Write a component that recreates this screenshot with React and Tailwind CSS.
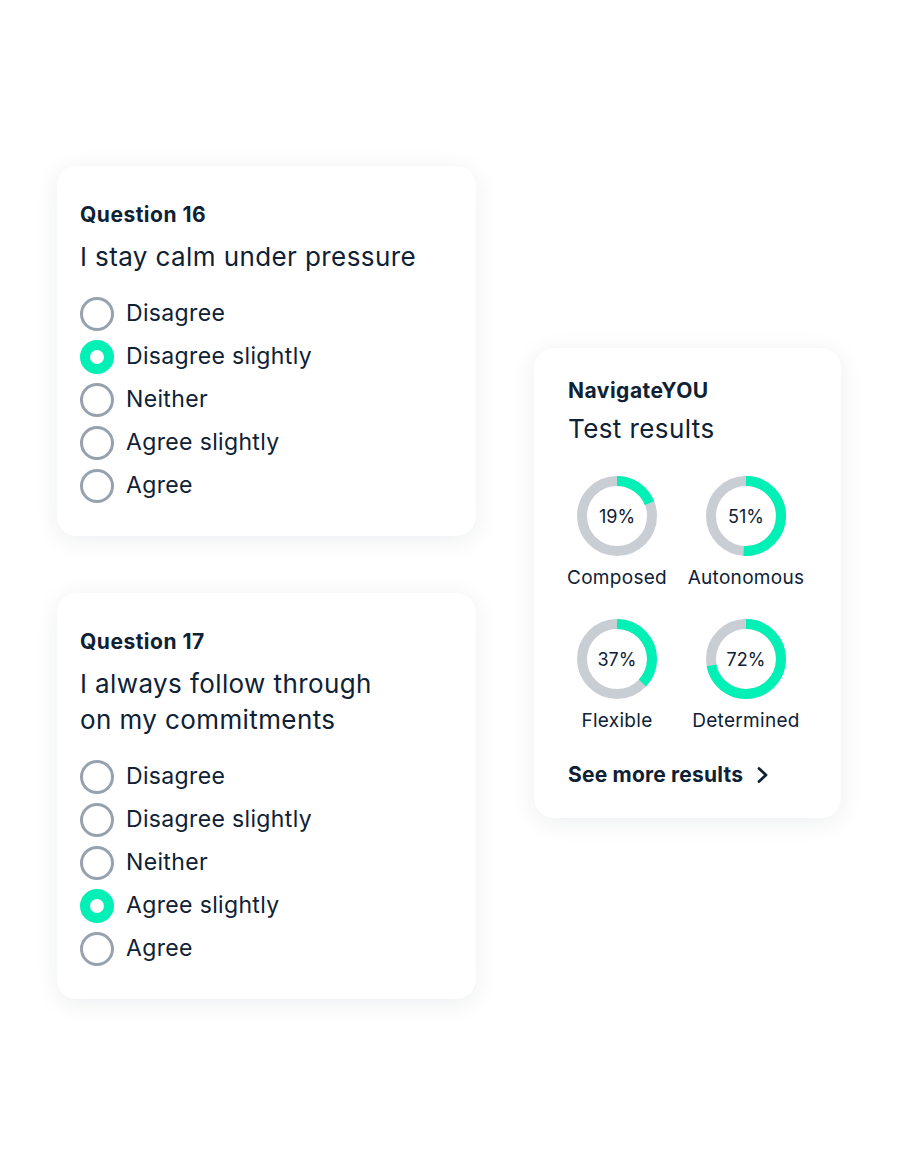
const OPTIONS = ['Disagree', 'Disagree slightly', 'Neither', 'Agree slightly', 'Agree'];

const RESULTS = [
  { label: 'Composed', value: 19 },
  { label: 'Autonomous', value: 51 },
  { label: 'Flexible', value: 37 },
  { label: 'Determined', value: 72 },
];

function Radio({ checked }) {
  if (checked) {
    return <span className="w-[34px] h-[34px] rounded-full border-[10px] border-[#00f0b5] bg-white flex-shrink-0"></span>;
  }
  return <span className="w-[34px] h-[34px] rounded-full border-[3px] border-[#96a2ae] bg-white flex-shrink-0"></span>;
}

function QuestionCard({ number, lines, selected }) {
  return (
    <div className="bg-white rounded-[20px] shadow-[0_4px_24px_rgba(15,33,51,0.08)] pl-[23px] pr-6 pt-[35px] pb-[29px]">
      <div className="text-[21px] leading-[28px] font-bold tracking-[0.5px]">Question {number}</div>
      <div className="mt-[10px] text-[26px] leading-[36px] tracking-[0.4px]">
        {lines.map((l) => (<div key={l}>{l}</div>))}
      </div>
      <div className="mt-[17px]">
        {OPTIONS.map((o) => (
          <div key={o} className="h-[43px] flex items-center gap-3">
            <Radio checked={o === selected} />
            <span className="text-[23px] tracking-[0.35px]">{o}</span>
          </div>
        ))}
      </div>
    </div>
  );
}

function Donut({ value, label }) {
  const r = 35;
  const c = 2 * Math.PI * r;
  return (
    <div className="w-[98px] flex flex-col items-center">
      <div className="relative w-[80px] h-[80px]">
        <svg width="80" height="80" viewBox="0 0 80 80" className="-rotate-90">
          <circle cx="40" cy="40" r={r} fill="none" stroke="#c9ced4" strokeWidth="10" />
          <circle cx="40" cy="40" r={r} fill="none" stroke="#00f0b5" strokeWidth="10" strokeDasharray={`${(c * value) / 100} ${c}`} />
        </svg>
        <div className="absolute inset-0 flex items-center justify-center text-[18px]">{value}%</div>
      </div>
      <div className="mt-[10px] text-[19px] leading-[24px] tracking-[0.3px] whitespace-nowrap">{label}</div>
    </div>
  );
}

export default function App() {
  return (
    <div className="w-[900px] h-[1170px] bg-white text-[#0e2135] flex pl-[57px] pt-[166px]" style={{ fontFamily: 'Inter, "Noto Sans", sans-serif' }}>
      <div className="w-[419px] flex flex-col gap-[57px]">
        <QuestionCard number={16} lines={['I stay calm under pressure']} selected="Disagree slightly" />
        <QuestionCard number={17} lines={['I always follow through', 'on my commitments']} selected="Agree slightly" />
      </div>
      <div className="ml-[58px] mt-[182px] w-[307px] self-start bg-white rounded-[20px] shadow-[0_4px_24px_rgba(15,33,51,0.08)] pl-[34px] pr-6 pt-[29px] pb-[29px]">
        <div className="text-[21px] leading-[28px] font-bold tracking-[0.5px]">NavigateYOU</div>
        <div className="mt-[6px] text-[26px] leading-[36px] tracking-[0.4px]">Test results</div>
        <div className="mt-[29px] grid grid-cols-[98px_98px] gap-x-[31px] gap-y-[29px]">
          {RESULTS.map((r) => (<Donut key={r.label} {...r} />))}
        </div>
        <div className="mt-[28px] flex items-center gap-[13px]">
          <span className="text-[21px] leading-[28px] font-bold tracking-[0.2px]">See more results</span>
          <svg width="14" height="18" viewBox="0 0 14 18" fill="none" stroke="currentColor" strokeWidth="2.8" strokeLinecap="round" strokeLinejoin="round">
            <polyline points="3,2.5 10,9 3,15.5" />
          </svg>
        </div>
      </div>
    </div>
  );
}
